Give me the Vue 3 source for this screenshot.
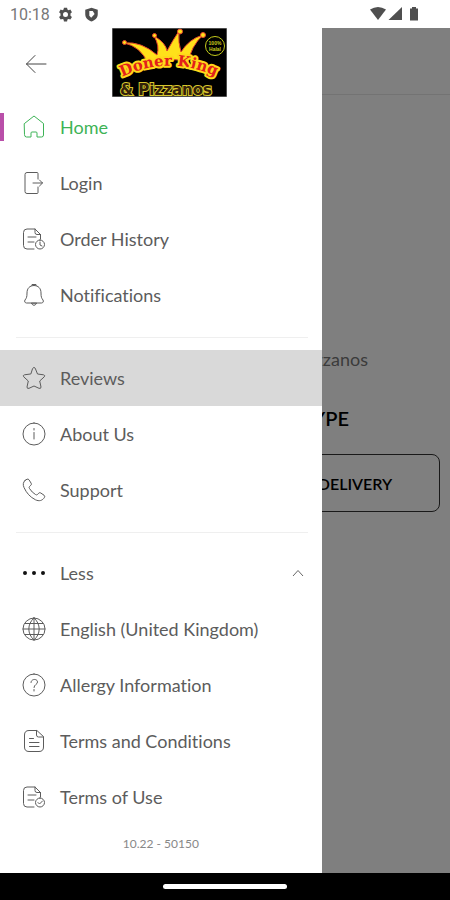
<template>
  <div class="screen">
    <header class="status-bar">
      <span class="clock">10:18</span>
      <svg class="status-icon" viewBox="0 0 24 24" aria-hidden="true">
        <path fill-rule="evenodd" d="M9.500 1h5l.6 3 1.800 1 2.900-1 2.500 4.200-2.300 2v3.600l2.300 2-2.500 4.200-2.900-1-1.800 1-.6 3h-5l-.6-3-1.800-1-2.900 1-2.500-4.200 2.300-2v-3.600l-2.300-2L4.200 4l2.900 1 1.800-1zM12 8a4 4 0 1 0 0 8 4 4 0 0 0 0-8z" />
      </svg>
      <svg class="status-icon shield" viewBox="0 0 24 24" aria-hidden="true">
        <path fill-rule="evenodd" d="M12 1l10 3.500v7c0 5.500-4 9.500-10 11.500C6 21 2 17 2 11.500v-7zM8.500 6.500v7.500l3 3 5.500-6-3-4.500z" />
      </svg>
      <span class="spacer"></span>
      <svg class="signals" viewBox="0 0 50 16" aria-hidden="true">
        <path d="M0 3.500Q8 -1.500 16 3.500L8 14z" />
        <path d="M32 1v13H18.500z" />
        <path d="M42 1h4v1.500h2V14.500h-8V2.500h2z" />
      </svg>
    </header>

    <div class="stage">
      <main class="page">
        <div class="page-bar"></div>
        <p class="welcome">Pizzanos</p>
        <h1 class="order-title">ORDER TYPE</h1>
        <button type="button" class="delivery">DELIVERY</button>
        <div class="scrim"></div>
      </main>

      <aside class="drawer">
        <div class="drawer-head">
          <button type="button" class="back" aria-label="Back">
            <svg class="icon" viewBox="0 0 24 24"><path d="M22 12H2.500M11 3.500L2.500 12l8.500 8.500" /></svg>
          </button>
          <svg class="logo" viewBox="0 0 115 69" role="img" aria-label="Doner King &amp; Pizzanos">
            <defs>
              <path id="arc" d="M2 53Q56 23 112 52" />
            </defs>
            <rect width="115" height="69" fill="#000" />
            <g stroke="#e8452c" stroke-width="1" fill="#ffe11a">
              <path d="M36 35Q28 18 12 15Q29 13 45 27Q48 18 42 8Q54 15 55 23Q61 12 67 3Q66 15 69 24Q77 11 91 7Q79 18 76 35Q56 27 36 35z" />
              <circle cx="12.500" cy="14.500" r="2" />
              <circle cx="42.500" cy="7.500" r="2" />
              <circle cx="68" cy="3.500" r="2.500" />
              <circle cx="91" cy="7" r="2.500" />
            </g>
            <text class="logo-name"><textPath href="#arc" startOffset="50%">Doner King</textPath></text>
            <text class="logo-sub" x="54" y="67">&amp; Pizzanos</text>
            <g class="badge">
              <circle cx="103" cy="18" r="9.500" />
              <text x="103" y="17">100%</text>
              <text x="103" y="23">Halal</text>
            </g>
            <rect class="logo-edge" x="0" y="0" width="115" height="69" />
          </svg>
        </div>

        <nav>
          <template v-for="(group, g) in groups" :key="g">
            <hr v-if="g > 0" class="divider" />
            <component
              :is="item.toggle ? 'button' : 'a'"
              v-for="item in visible(group)"
              :key="item.label"
              class="row"
              :class="{ active: item.label === current, pressed: item.label === 'Reviews' }"
              :href="item.toggle ? null : '#'"
              :type="item.toggle ? 'button' : null"
              @click.prevent="select(item)"
            >
              <svg class="icon" :class="{ solid: item.toggle }" viewBox="0 0 24 24" aria-hidden="true">
                <path :d="item.icon" />
              </svg>
              <span class="label">{{ item.toggle && !expanded ? 'More' : item.label }}</span>
              <svg v-if="item.toggle" class="chevron" :class="{ down: !expanded }" viewBox="0 0 12 12" aria-hidden="true">
                <path d="M1 9l5-5.500L11 9" />
              </svg>
            </component>
          </template>
        </nav>

        <p class="version">10.22 - 50150</p>
      </aside>
    </div>

    <footer class="nav-bar"><span class="handle"></span></footer>
  </div>
</template>

<script setup>
import { ref } from 'vue'

const current = ref('Home')
const expanded = ref(true)

const circle = 'M12 1a11 11 0 1 0 0 22 11 11 0 0 0 0-22z'

const groups = [
  [
    { label: 'Home', icon: 'M2.500 8.500L12 1l9.500 7.500V20q0 2-2 2H15v-4q0-1-1-1h-4q-1 0-1 1v4H4.500q-2 0-2-2z' },
    { label: 'Login', icon: 'M16 8V2.500q0-1-1-1H5q-2 0-2 2v17q0 2 2 2h10q1 0 1-1V16M11 12h9.500M17.500 9l3 3-3 3' },
    { label: 'Order History', icon: 'M12 22H5q-3.500 0-3.500-3.500v-13Q1.500 2 5 2h8l5.500 5.500V12M13 2v3.500q0 2 2 2h3.500M6 10h8M6 15h6M18 13a4.500 4.500 0 1 0 0 9 4.500 4.500 0 0 0 0-9zM18 15v3l2 1' },
    { label: 'Notifications', icon: 'M12 2.500c-4.500 0-7 3-7 7.500 0 4-.5 5-2 7-.8 1.300-.2 3 1.500 3h15c1.700 0 2.300-1.700 1.500-3-1.500-2-2-3-2-7 0-4.500-2.500-7.500-7-7.500zM10 2.700V1.500h4v1.200M9.500 20.500q2.500 4 5 0z' }
  ],
  [
    { label: 'Reviews', icon: 'M10.800 2.200q1.200-1.800 2.400 0L15.500 8l6 .8q2 .5.800 2L17.700 15l1.300 6q0 2-2 1.300L12 20l-5 2.300q-2 .7-2-1.300l1.300-6-4.600-4.200q-1.200-1.500.8-2l6-.8z' },
    { label: 'About Us', icon: circle + 'M12 10.500V17M12 6.500v1.500' },
    { label: 'Support', icon: 'M3 2.500l2-1.300q1.200-.5 2 .6l2.200 3.500q.6 1.200-.4 2L7.500 8.500q-.8.800 0 2 2.500 4 6 6 1.200.8 2 0l1.200-1.300q1-1 2.100-.2l3.200 2.200q1.200 1 .5 2.100c-2 3.500-5.500 4.200-9 2.500C8 19 4.500 15 2 9.500.8 6.500 1 4.500 3 2.500z' }
  ],
  [
    { label: 'Less', toggle: true, icon: 'M3 10a2 2 0 1 0 0 4 2 2 0 0 0 0-4zM12 10a2 2 0 1 0 0 4 2 2 0 0 0 0-4zM21 10a2 2 0 1 0 0 4 2 2 0 0 0 0-4z' },
    { label: 'English (United Kingdom)', icon: circle + 'M12 1c-7 6-7 16 0 22M12 1c7 6 7 16 0 22M12 1v22M1 12h22M3 6.500h18M3 17.500h18' },
    { label: 'Allergy Information', icon: circle + 'M9 9.500c0-4 6.500-4 6.500-.5 0 2.500-3.500 2.500-3.500 5.500M12 16.500v1.500' },
    { label: 'Terms and Conditions', icon: 'M14.500 1.500H7Q2.500 1.500 2.500 6v12Q2.500 22.500 7 22.500h10q4.500 0 4.500-4.500V8zM14.500 1.500V6q0 2 2 2h5M7.500 9.500h4M7.500 13.500h9.500M7.500 17.500h9.500' },
    { label: 'Terms of Use', icon: 'M12 22H5q-3.500 0-3.500-3.500v-13Q1.500 2 5 2h8l5.500 5.500V12M13 2v3.500q0 2 2 2h3.500M6 10h8M6 15h6M18 13a4.500 4.500 0 1 0 0 9 4.500 4.500 0 0 0 0-9zM16 17.500l1.500 1.500 3-3' }
  ]
]

const visible = (group) => group.filter((item) => expanded.value || item.toggle || !group[0].toggle)

const select = (item) => {
  if (item.toggle) {
    expanded.value = !expanded.value
  } else {
    current.value = item.label
  }
}
</script>

<style>
body {
  margin: 0;
}
</style>

<style scoped>
.screen {
  display: flex;
  flex-direction: column;
  min-height: 100vh;
  background: #fff;
  font-family: Lato, 'Liberation Sans', sans-serif;
  color: #5c5c5c;
}

.status-bar {
  display: flex;
  align-items: center;
  height: 28px;
  padding: 0 30px 0 10px;
  box-sizing: border-box;
  fill: #4f4f4f;
}

.clock {
  font-family: Roboto, sans-serif;
  font-size: 16px;
  color: #777;
  margin-right: 8px;
}

.status-icon {
  width: 15px;
  height: 15px;
}

.shield {
  margin-left: 11px;
}

.spacer {
  flex: 1;
}

.signals {
  width: 50px;
  height: 16px;
}

.stage {
  flex: 1;
  display: grid;
}

.page,
.drawer {
  grid-area: 1 / 1;
}

.page {
  position: relative;
  display: flex;
  flex-direction: column;
  align-items: flex-end;
}

.page-bar {
  align-self: stretch;
  height: 66px;
  border-bottom: 1px solid #e6e6e6;
}

.welcome {
  margin: 252px 82px 0 0;
  font-size: 18px;
  line-height: 24px;
  color: #777;
}

.order-title {
  margin: 34px 101px 0 0;
  font-size: 20px;
  font-weight: 600;
  line-height: 26px;
  color: #000;
}

.delivery {
  width: 170px;
  height: 58px;
  margin: 23px 10px 0 0;
  border: 1px solid #333;
  border-radius: 8px;
  background: none;
  font: 600 16px Lato, sans-serif;
  color: #000;
}

.scrim {
  position: absolute;
  inset: 0;
  background: rgba(0, 0, 0, 0.5);
}

.drawer {
  position: relative;
  width: 71.5%;
  background: #fff;
}

.drawer-head {
  display: flex;
  align-items: flex-start;
  height: 71px;
}

.back {
  display: flex;
  margin: 24px 64px 0 24px;
  padding: 0;
  border: 0;
  background: none;
  color: #444;
}

.logo {
  width: 115px;
  height: 69px;
}

.logo-name {
  font: bold 15px 'DejaVu Serif', serif;
  text-anchor: middle;
  fill: #e3201b;
  stroke: #ffd81a;
  stroke-width: 4px;
  stroke-linejoin: round;
  paint-order: stroke;
}

.logo-sub {
  font: bold 15px 'DejaVu Sans', sans-serif;
  text-anchor: middle;
  fill: #33210a;
  stroke: #d8c72c;
  stroke-width: 2px;
  paint-order: stroke;
}

.badge circle {
  fill: none;
  stroke: #c6cc1c;
  stroke-width: 1px;
}

.badge text {
  font: bold 5px 'Liberation Sans', sans-serif;
  text-anchor: middle;
  fill: #c6cc1c;
}

.logo-edge {
  fill: none;
  stroke: #999;
  stroke-width: 1px;
}

.row {
  display: flex;
  align-items: center;
  gap: 14px;
  width: 100%;
  height: 56px;
  padding: 0 18px 0 22px;
  box-sizing: border-box;
  border: 0;
  background: none;
  font: 400 18px/24px Lato, sans-serif;
  font-variant-ligatures: none;
  text-align: left;
  text-decoration: none;
  color: inherit;
}

.row.active {
  position: relative;
  color: #3db356;
}

.row.active::before {
  content: '';
  position: absolute;
  left: 0;
  top: 14px;
  width: 4px;
  height: 28px;
  background: #b94fa9;
}

.row.pressed {
  background: #d9d9d9;
}

.label {
  flex: 1;
}

.icon {
  width: 24px;
  height: 24px;
  fill: none;
  stroke: currentColor;
  stroke-width: 1;
  stroke-linecap: round;
  stroke-linejoin: round;
}

.icon.solid {
  fill: #111;
  stroke: none;
}

.chevron {
  width: 12px;
  height: 12px;
  fill: none;
  stroke: #666;
  stroke-width: 1;
}

.chevron.down {
  transform: rotate(180deg);
}

.divider {
  height: 1px;
  margin: 14px 14px 12px 16px;
  border: 0;
  background: #efefef;
}

.version {
  margin: 0;
  padding: 9px 0 19px;
  font-size: 12px;
  line-height: 20px;
  text-align: center;
  color: #888;
}

.nav-bar {
  display: flex;
  justify-content: center;
  align-items: center;
  height: 27px;
  background: #000;
}

.handle {
  width: 124px;
  height: 5px;
  border-radius: 3px;
  background: #fff;
}
</style>
